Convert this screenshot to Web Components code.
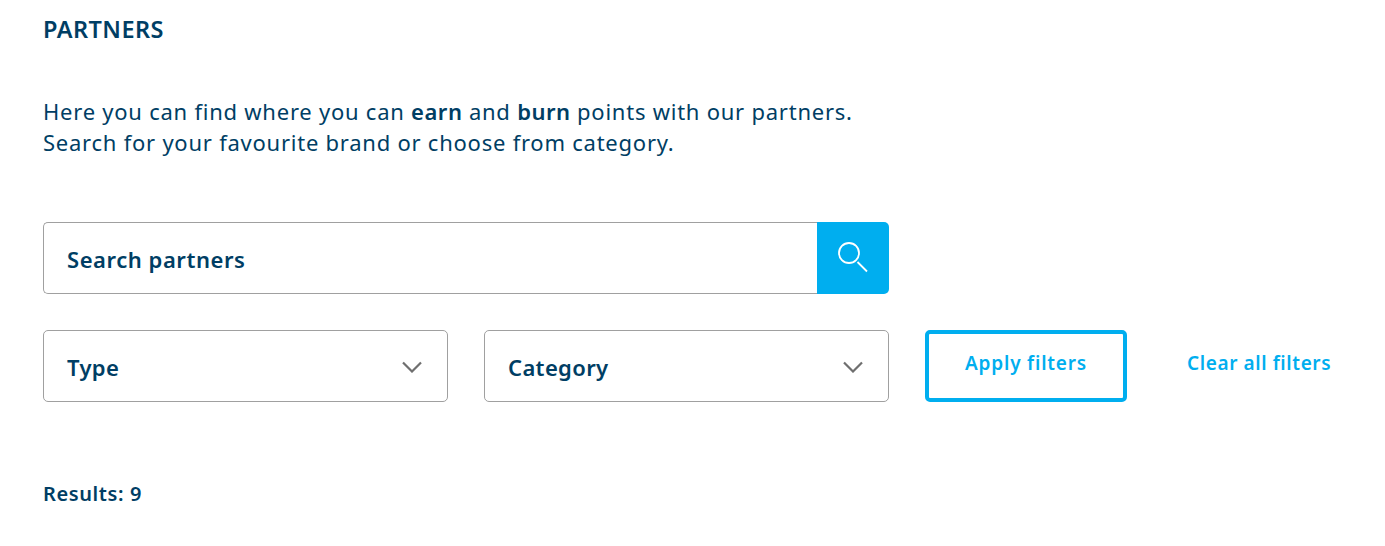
<!DOCTYPE html>
<html>
<head>
<meta charset="utf-8">
<title>Partners</title>
<style>
  html, body { margin: 0; background: #fff; }
  body { font-family: "Noto Sans", sans-serif; color: #003e64; }
  b { font-weight: 600; letter-spacing: 0.5px; }
</style>
</head>
<body>
<partners-page>
  <span slot="title">PARTNERS</span>
  <span slot="intro">Here you can find where you can <b>earn</b> and <b>burn</b> points with our partners.<br>Search for your favourite brand or choose from category.</span>
  <search-box slot="search" placeholder="Search partners"></search-box>
  <filter-select slot="filters" label="Type"></filter-select>
  <filter-select slot="filters" label="Category"></filter-select>
  <apply-button slot="filters">Apply filters</apply-button>
  <clear-link slot="filters">Clear all filters</clear-link>
  <span slot="results">Results: 9</span>
</partners-page>

<script>
class PartnersPage extends HTMLElement {
    constructor() {
        super();
        this.attachShadow({ mode: 'open' }).innerHTML = `
            <style>
                :host { display: block; padding: 16px 43px 0; box-sizing: border-box; height: 546px; }
                h1 { margin: 0; font-size: 23.5px; line-height: 26px; font-weight: 600; letter-spacing: 0.45px; }
                p { margin: 54px 0 0; font-size: 22px; line-height: 31px; letter-spacing: 0.76px; }
                .search { margin-top: 64px; width: 846px; }
                .filters { display: flex; gap: 36px; margin-top: 36px; align-items: stretch; }
                .results { margin-top: 80px; font-size: 20px; line-height: 24px; font-weight: 600; letter-spacing: 0.6px; }
            </style>
            <h1><slot name="title"></slot></h1>
            <p><slot name="intro"></slot></p>
            <div class="search"><slot name="search"></slot></div>
            <div class="filters"><slot name="filters"></slot></div>
            <div class="results"><slot name="results"></slot></div>
        `;
    }
}

class SearchBox extends HTMLElement {
    constructor() {
        super();
        this.attachShadow({ mode: 'open' }).innerHTML = `
            <style>
                :host { display: flex; height: 72px; }
                .field {
                    flex: 1; display: flex; align-items: center; padding: 2px 0 0 23px;
                    border: 1px solid #a0a0a0; border-right: 0; border-radius: 5px 0 0 5px;
                    font-size: 22px; font-weight: 600; color: #003e64; letter-spacing: 0.55px;
                }
                .go {
                    width: 72px; display: flex; align-items: center; justify-content: center;
                    background: #00aeef; border-radius: 0 5px 5px 0;
                }
            </style>
            <div class="field">${this.getAttribute('placeholder')}</div>
            <div class="go">
                <svg width="32" height="32" viewBox="0 0 32 32" fill="none" stroke="#fff" stroke-width="1.8">
                    <circle cx="12" cy="11" r="10"/>
                    <path d="M20.5 20l9.5 9.5"/>
                </svg>
            </div>
        `;
    }
}

class FilterSelect extends HTMLElement {
    constructor() {
        super();
        this.attachShadow({ mode: 'open' }).innerHTML = `
            <style>
                :host {
                    display: flex; align-items: center; justify-content: space-between; box-sizing: border-box;
                    width: 405px; height: 72px; padding: 2px 25px 0 23px;
                    border: 1px solid #a0a0a0; border-radius: 5px;
                    font-size: 22px; font-weight: 600; color: #003e64; letter-spacing: 0.35px;
                }
                svg { display: block; }
            </style>
            <span>${this.getAttribute('label')}</span>
            <svg width="20" height="12" viewBox="0 0 20 12" fill="none" stroke="#6f6f6f" stroke-width="2.2">
                <path d="M1 1.5l9 9 9-9"/>
            </svg>
        `;
    }
}

class ApplyButton extends HTMLElement {
    constructor() {
        super();
        this.attachShadow({ mode: 'open' }).innerHTML = `
            <style>
                :host {
                    display: flex; justify-content: center; padding-top: 17px; box-sizing: border-box;
                    width: 202px; height: 72px;
                    border: 4px solid #00aeef; border-radius: 5px;
                    font-size: 19px; line-height: 24px; font-weight: 600; color: #00aeef; letter-spacing: 0.8px;
                }
            </style>
            <slot></slot>
        `;
    }
}

class ClearLink extends HTMLElement {
    constructor() {
        super();
        this.attachShadow({ mode: 'open' }).innerHTML = `
            <style>
                :host {
                    display: block; margin-left: 24px; padding-top: 21px;
                    font-size: 19px; line-height: 24px; font-weight: 600; color: #00aeef; letter-spacing: 0.6px;
                }
            </style>
            <slot></slot>
        `;
    }
}

customElements.define('partners-page', PartnersPage);
customElements.define('search-box', SearchBox);
customElements.define('filter-select', FilterSelect);
customElements.define('apply-button', ApplyButton);
customElements.define('clear-link', ClearLink);
</script>
</body>
</html>
